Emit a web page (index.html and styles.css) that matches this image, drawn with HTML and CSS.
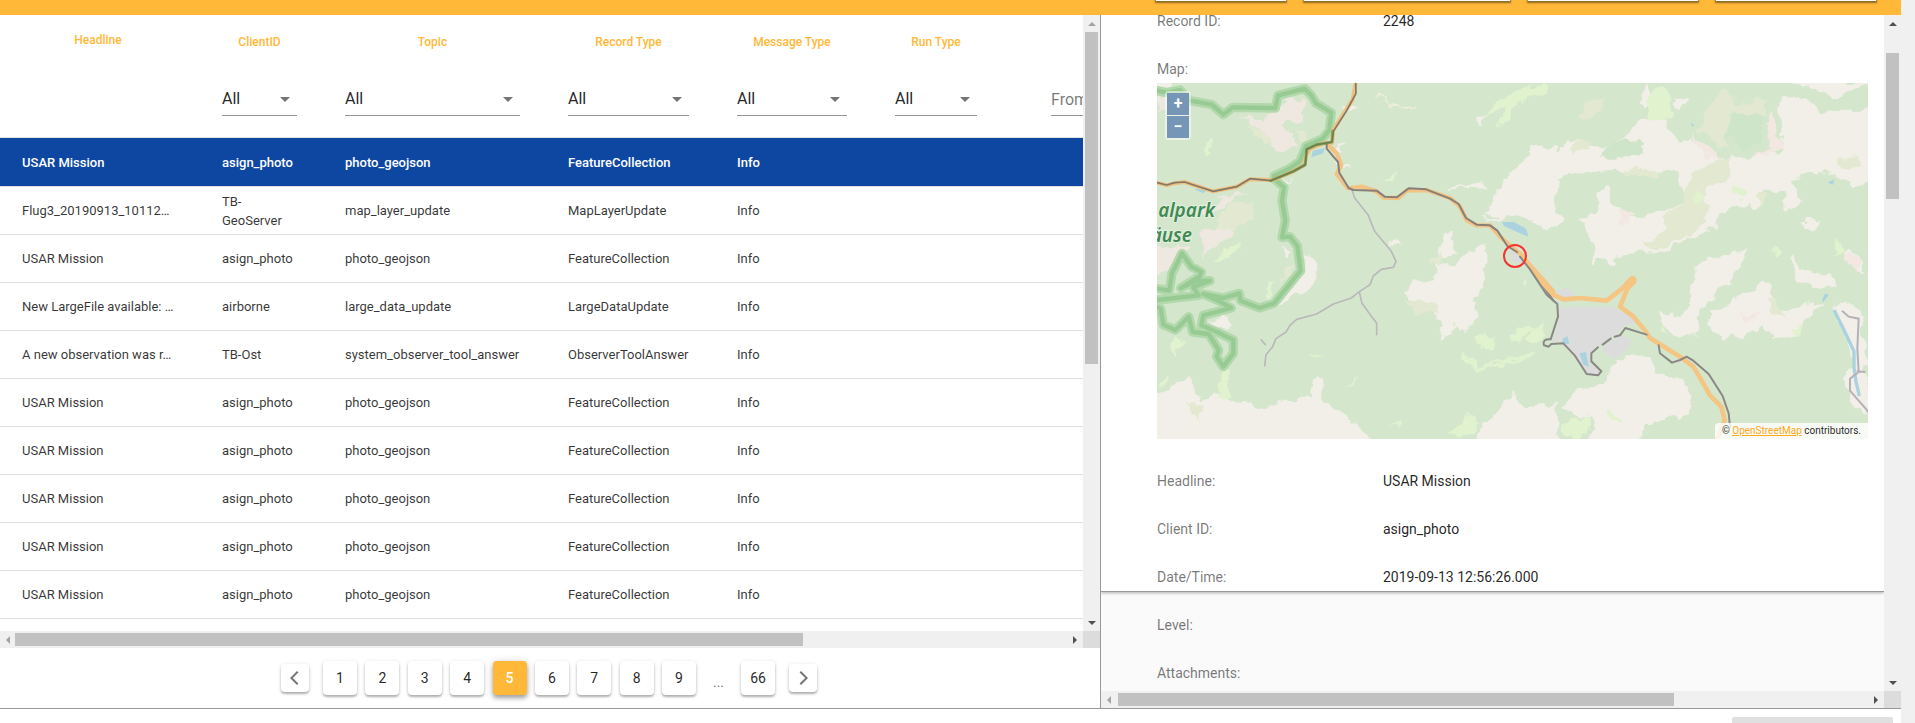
FILE: index.html
```html
<!DOCTYPE html>
<html lang="en">
<head>
<meta charset="utf-8">
<title>Records</title>
<link rel="stylesheet" href="styles.css">
</head>
<body>
<div class="page">
  <div class="app">
    <header class="toolbar">
      <button class="tool tool-s" type="button" aria-label="Tool 1"></button>
      <button class="tool tool-l" type="button" aria-label="Tool 2"></button>
      <button class="tool tool-m" type="button" aria-label="Tool 3"></button>
      <button class="tool tool-n" type="button" aria-label="Tool 4"></button>
    </header>

    <main class="panes">
      <section class="list-pane">
        <div class="scroller">
          <div class="view">
            <table class="records">
              <colgroup>
                <col class="c-head"><col class="c-client"><col class="c-topic"><col class="c-record"><col class="c-msg"><col class="c-run"><col class="c-date">
              </colgroup>
              <thead>
                <tr>
                  <th class="plain">Headline</th>
                  <th><label for="f-client">ClientID</label><span class="pick"><select id="f-client"><option>All</option></select></span></th>
                  <th><label for="f-topic">Topic</label><span class="pick"><select id="f-topic"><option>All</option></select></span></th>
                  <th><label for="f-record">Record Type</label><span class="pick"><select id="f-record"><option>All</option></select></span></th>
                  <th><label for="f-msg">Message Type</label><span class="pick"><select id="f-msg"><option>All</option></select></span></th>
                  <th><label for="f-run">Run Type</label><span class="pick"><select id="f-run"><option>All</option></select></span></th>
                  <th class="date"><input type="text" placeholder="From" aria-label="From"></th>
                </tr>
              </thead>
              <tbody>
                <tr class="selected"><td>USAR Mission</td><td>asign_photo</td><td>photo_geojson</td><td>FeatureCollection</td><td>Info</td><td></td><td></td></tr>
                <tr><td>Flug3_20190913_10112…</td><td>TB-GeoServer</td><td>map_layer_update</td><td>MapLayerUpdate</td><td>Info</td><td></td><td></td></tr>
                <tr><td>USAR Mission</td><td>asign_photo</td><td>photo_geojson</td><td>FeatureCollection</td><td>Info</td><td></td><td></td></tr>
                <tr><td>New LargeFile available: …</td><td>airborne</td><td>large_data_update</td><td>LargeDataUpdate</td><td>Info</td><td></td><td></td></tr>
                <tr><td>A new observation was r…</td><td>TB-Ost</td><td>system_observer_tool_answer</td><td>ObserverToolAnswer</td><td>Info</td><td></td><td></td></tr>
                <tr><td>USAR Mission</td><td>asign_photo</td><td>photo_geojson</td><td>FeatureCollection</td><td>Info</td><td></td><td></td></tr>
                <tr><td>USAR Mission</td><td>asign_photo</td><td>photo_geojson</td><td>FeatureCollection</td><td>Info</td><td></td><td></td></tr>
                <tr><td>USAR Mission</td><td>asign_photo</td><td>photo_geojson</td><td>FeatureCollection</td><td>Info</td><td></td><td></td></tr>
                <tr><td>USAR Mission</td><td>asign_photo</td><td>photo_geojson</td><td>FeatureCollection</td><td>Info</td><td></td><td></td></tr>
                <tr><td>USAR Mission</td><td>asign_photo</td><td>photo_geojson</td><td>FeatureCollection</td><td>Info</td><td></td><td></td></tr>
                <tr><td></td><td></td><td></td><td></td><td></td><td></td><td></td></tr>
              </tbody>
            </table>
          </div>
          <div class="bar-v">
            <span class="arrow up off"></span><div class="track"><div class="thumb list-v"></div></div><span class="arrow down"></span>
          </div>
          <div class="bar-h">
            <span class="arrow left off"></span><div class="track"><div class="thumb list-h"></div></div><span class="arrow right"></span>
          </div>
          <div class="corner"></div>
        </div>

        <nav class="pager" aria-label="Pages">
          <button class="step" type="button" aria-label="Previous page"><svg viewBox="0 0 24 24"><path d="M15.4 6.4 14 5l-7 7 7 7 1.4-1.4-5.6-5.6z"/></svg></button>
          <div class="numbers">
            <button type="button">1</button><button type="button">2</button><button type="button">3</button><button type="button">4</button><button type="button" class="current" aria-current="page">5</button><button type="button">6</button><button type="button">7</button><button type="button">8</button><button type="button">9</button>
          </div>
          <span class="more">...</span>
          <button type="button">66</button>
          <button class="step" type="button" aria-label="Next page"><svg viewBox="0 0 24 24"><path d="M8.6 17.6 10 19l7-7-7-7-1.4 1.4 5.6 5.6z"/></svg></button>
        </nav>
      </section>

      <section class="detail-pane">
        <div class="view">
          <div class="card">
            <dl class="first"><dt>Record ID:</dt><dd>2248</dd></dl>
            <p class="map-label">Map:</p>
            <div class="map">
              <svg class="map-art" viewBox="0 0 711 356" preserveAspectRatio="xMidYMid slice" role="img" aria-label="Map">
                <defs>
                  <filter id="rough" x="-2%" y="-2%" width="104%" height="104%">
                    <feTurbulence type="fractalNoise" baseFrequency="0.022" numOctaves="3" seed="4" result="n"/>
                    <feDisplacementMap in="SourceGraphic" in2="n" scale="46" xChannelSelector="R" yChannelSelector="G"/>
                    <feGaussianBlur stdDeviation="2"/>
                  </filter>
                  <filter id="soft" x="-2%" y="-2%" width="104%" height="104%"><feGaussianBlur stdDeviation="1.3"/></filter>
                </defs>
                <rect width="711" height="356" fill="#d4e7cd"/>
                <!-- land cover, west -->
                <g transform="scale(.33333) translate(-21 -39)" filter="url(#rough)">
                  <g fill="#f2efe8">
                    <path d="M10 20H70L62 56 10 62zM0 975L50 960 80 930 115 925 140 965 150 985 215 970 260 990 300 1012 350 1020 400 990 480 975 495 930 520 935 520 985 560 1020 600 1045 640 1080 660 1120H0z"/>
                    <path d="M975 1120L1000 1060 1040 1030 1090 970 1120 1020 1220 990V1130z"/>
                    <path d="M1220 230L1150 235 1140 265 1090 290 1080 310 1105 340 1060 370 1030 400 1000 430 1050 435 1080 410 1130 450 1220 470z"/>
                    <path d="M750 670L800 640 850 630 860 580 920 590 950 550 1000 525 1005 600 1000 650 970 700 985 740 970 775 915 770 870 805 875 770 840 720 790 690z"/>
                    <path d="M885 480L910 480 900 510 925 550 860 570zM460 560L505 575 500 615 460 665 380 710 420 660 460 610zM400 525L428 540 415 565 398 555zM180 755L240 740 250 765 225 778zM900 350L1010 340V352L900 358zM560 230L590 215 570 240 580 275 610 300 560 290zM720 506L760 518 730 532zM360 330L430 322 400 345z"/>
                    <path d="M1000 440L1060 445 1050 455 1000 445zM580 120L630 115 610 132zM980 150L1020 125 990 160z"/>
                  </g>
                  <g fill="#efe8e0">
                    <path d="M370 105L430 80 470 100 450 150 400 160 430 240 380 245 340 190 290 150 260 140 350 150z"/>
                    <path d="M150 420L220 380 290 365 240 400 150 445zM160 490L210 465 245 480 210 530 150 555zM10 530L80 520 120 540 70 600 10 620zM21 90L50 80 60 110 21 125z"/>
                  </g>
                  <g fill="#e2e9d0"><path d="M210 430L250 400 310 405 310 450 240 480 200 470zM300 170L350 190 370 220 330 215zM430 170L480 205 450 215zM760 690L850 700 870 735 800 730zM840 560L880 545 870 590zM110 1000L160 1000 150 1050 120 1030zM400 600L440 570 420 620 390 640z"/></g>
                  <g fill="#e0f2ce">
                    <path d="M190 560L240 530 285 515 270 545 215 565zM265 850L240 900 235 970 205 980 210 910 240 870zM350 620L368 640 358 690 346 680zM165 215L180 205 190 245 175 255zM1030 100L1090 65 1150 45 1120 80 1010 130zM890 1090L950 1035 990 1060 970 1095zM985 805L1030 795 1035 835 1000 835zM1075 800L1140 760 1160 780 1110 820zM70 800L100 820 65 860zM25 945L55 915 45 950zM590 950L625 925 605 950zM710 322L736 310 730 332zM480 850L510 848 500 860zM720 1070L750 1060 750 1080z"/>
                    <path d="M935 855L990 895 1060 880 1150 855" fill="none" stroke="#e0f2ce" stroke-width="10"/>
                  </g>
                  <path d="M680 76L720 106 800 100" fill="none" stroke="#eeede0" stroke-width="6"/>
                </g>
                <!-- land cover, east -->
                <g transform="translate(323 -13) scale(.33333)" filter="url(#rough)">
                  <g fill="#f2efe8">
                    <path d="M20 430L30 390 60 350 95 300 150 260V225L230 235 270 205 370 240 420 206 480 156 510 140 550 146 570 185 600 216 640 206 680 236 710 276 750 256 800 256 850 251 910 246 900 136 890 96 920 76 980 86 1020 126 1190 110V335L1120 346 1060 316 1000 306 930 326 950 366 975 401 910 416V361L850 356 830 416 770 406 720 436 710 466 660 496 620 516 540 545 460 550 410 560 400 590 370 570 330 580 345 540 330 490 300 450 350 420 345 370 395 345 400 400 430 440 480 440 560 420 620 400 600 340 600 310 420 296 340 300 260 310 180 340 150 390 190 400 240 460 200 475 130 440z"/>
                    <path d="M640 590L720 560 790 540 785 590 735 650 695 680 660 740 655 800 600 810 555 770 535 725 600 735 640 670z"/>
                    <path d="M690 720L740 700 800 660 850 630 880 650 885 690 905 720 1020 700 980 750 960 790 880 795 840 765 800 800 720 805 690 765z"/>
                    <path d="M240 1010L290 965 380 930 410 870 450 850 500 855 530 910 600 930 635 985 620 1030 570 1050 500 1050 480 1120H330L335 1050 290 1030z"/>
                    <path d="M0 1120L50 1060 90 970 130 1010 180 1000 240 1050 220 1120zM940 550L960 600 1060 615 1065 640 1000 655 950 635 935 590zM970 450L1030 450 1000 475 970 475zM1090 545L1150 565 1160 610 1110 600zM1060 700L1140 720 1155 900 1170 1040 1110 990 1100 920 1125 880 1100 800zM-10 530L15 525 10 620-10 660zM480 90L500 40 520 90 490 120zM580 80L620 90 600 125zM900 30L1010 55 1060 80 1120 60 1180 50V36L1040 30z"/>
                  </g>
                  <g fill="#f2e7e1"><path d="M400 425L465 425 450 450 420 455zM820 250L870 240 860 150 885 120 890 190 915 235 850 260zM640 190L700 240 700 280 670 260zM1090 560L1145 560 1140 605 1110 600zM780 730L840 735 810 755z"/></g>
                  <g fill="#e2e9d0"><path d="M650 170L690 100 730 50 760 95 860 90 850 140 750 130 740 240 690 210zM640 306L700 286 750 256 745 336 680 346 670 386 695 406 660 436 680 456 620 506 520 536 490 520 570 470 550 436 610 406 610 366zM310 100L380 80 370 120 300 160zM265 235L320 215 325 235 270 265zM430 290L540 305 540 325 440 310zM860 680L900 700 910 740 870 715zM1065 270L1140 265 1130 290 1080 290zM830 370L860 365 840 410z"/></g>
                  <g fill="#cfe5c9"><path d="M360 265L400 215 480 210 490 245 400 270zM760 120L850 140 850 220 780 235 745 200z"/></g>
                  <g fill="#e0f2ce">
                    <path d="M80 80L140 50 200 45 190 75 100 100 90 150 60 160zM500 90L550 50 575 100 580 140 510 150zM755 340L795 370 785 390zM240 1080L270 1045 330 1040 320 1090 250 1100zM130 810L200 750 190 810zM390 1010L430 1060 420 1075 395 1040zM880 530L905 545 890 565zM540 790L550 760 560 800zM640 370L680 380 650 400zM930 770L975 775 960 800zM1060 510L1100 540 1060 560zM120 640L150 620 130 655z"/>
                    <path d="M0 890L140 858" fill="none" stroke="#e0f2ce" stroke-width="8"/>
                  </g>
                </g>
                <!-- water, town, roads and boundary, west -->
                <g transform="scale(.33333) translate(-21 -39)" filter="url(#soft)">
                  <g fill="#aad3df"><path d="M484 262l4-20 36-8-4 16zM1056 456l36 0 36 20 8 24-30-12-44-20zM130 356l40 4-10 10z"/></g>
                  <defs>
                    <path id="park" d="M21 62L50 68 90 60 120 92 186 104 220 134 248 112 376 114 384 76 464 56 484 76 498 100 544 128 538 180 518 206 468 228 450 274 418 296 372 318V326L402 352 396 392 406 452 396 502 420 500 442 528 452 602 372 700 328 714 272 692 268 670 220 684 160 672 200 690 244 714 160 736 154 766 210 790 250 810V850L220 890 200 860 206 840 176 792 128 786 116 740 76 780 40 764 32 716 21 712M21 656L58 662 66 610 96 550 124 590 154 606 150 618 92 654 140 632 180 632 130 652 146 676 21 690"/>
                  </defs>
                  <g fill="none" stroke-linejoin="round" stroke-linecap="round">
                    <use href="#park" stroke="#b2d8ac" stroke-width="28"/>
                    <use href="#park" stroke="#98cb94" stroke-width="13"/>
                    <path d="M606 360l8 24 40 50 20 50 50 60 14 30-8 18-36 6-24 20-10 26-36 24-20 16-54 18-50 30-60 16-20 18-12 20-30 20-10 24-20 24-4 34M628 666l8 34 26 36 18 24 0 34M334 810l12 14" stroke="#bbb8bb" stroke-width="5"/>
                    <path d="M617 39L608 88 580 132 550 180 546 218 520 220 480 236 468 256 462 286 430 304 370 330 300 328 260 350 190 364 140 348 104 336 74 340 50 346 21 338" stroke="#f0c080" stroke-width="12"/>
                    <path d="M536 226L560 250 574 285 560 312 594 355 635 350 680 364 700 383 746 384 770 362 830 360 900 384 930 410 950 450 980 466 1020 466 1050 500 1110 552 1210 664" stroke="#f3c384" stroke-width="13"/>
                    <path d="M617 39L618 70 590 122 550 184 546 216 500 224 470 238 466 284 430 304 362 332 300 326 260 350 190 364 140 348 104 336 74 338 50 345 21 338" stroke="#827869" stroke-width="5"/>
                    <path d="M530 222V236L564 276 568 308 596 354 610 360 680 362 704 380 740 382 776 355 828 358 900 386 926 402 948 444 980 464 1020 466 1042 482 1072 528 1120 558 1210 692" stroke="#87807a" stroke-width="6"/>
                    <path d="M548 184L546 216 500 224 470 238 466 284 430 304 362 332" stroke="#52883a" stroke-opacity=".55" stroke-width="9"/>
                  </g>
                </g>
                <!-- water, town and roads, east -->
                <g transform="translate(323 -13) scale(.33333)" filter="url(#soft)">
                  <g fill="#dcdcdc"><path d="M240 712L400 710 450 740 470 760 430 768 410 796 370 820 335 850V880L362 905 350 914 320 912 285 855 240 810 215 820 235 760zM370 825L425 796 455 810 440 840 405 868 370 845zM86 540L116 554 128 580 96 572zM230 662L260 652 292 680 240 682z"/></g>
                  <g fill="#aad3df"><path d="M248 806l14-8 6 24-20 0zM298 850l20-4 8 44-16-6zM1044 338l18-10-2 16zM1026 690l10-20 10 6-16 20zM632 160l10 2-4 10z"/></g>
                  <path d="M1062 720l30 60 30 64 0 50 6 40 10 44" fill="none" stroke="#aad3df" stroke-width="10"/>
                  <path d="M1086 722l20 18 30 6-4 90 4 70-26 20 0 36 26 30 30 34M1130 904l26 2" fill="none" stroke="#b4b2b6" stroke-width="6"/>
                  <g fill="none" stroke-linejoin="round" stroke-linecap="round">
                    <path d="M120 550L160 600 188 638 220 674 250 688 300 684 380 692 426 656 456 624Q468 626 460 638L442 656 420 710 456 736 494 780 510 804 600 860 640 890 664 930 690 976 724 1010 734 1050 712 1107" stroke="#f5c583" stroke-width="14"/>
                    <path d="M120 560L150 598 200 674 232 702 234 740 212 808Q186 806 192 826L206 830 214 822 250 820 284 856 320 912 354 916 364 904 334 874V850L354 832M368 824L392 806M404 800L420 796 436 774 500 794M536 826L540 850 576 878 600 870 620 860 640 872 686 912 728 978 746 1030 750 1070" stroke="#8a8884" stroke-width="6"/>
                  </g>
                </g>
                <g class="map-name"><text x="58" y="134">alpark</text><text x="35" y="159">äuse</text></g>
                <circle cx="358" cy="173" r="11" fill="none" stroke="#f53333" stroke-width="2"/>
              </svg>
              <div class="zoom-box">
                <button type="button" aria-label="Zoom in">+</button>
                <button type="button" aria-label="Zoom out">−</button>
              </div>
              <p class="credit">© <a href="#">OpenStreetMap</a> contributors.</p>
            </div>
            <dl class="fields">
              <dt>Headline:</dt><dd>USAR Mission</dd>
              <dt>Client ID:</dt><dd>asign_photo</dd>
              <dt>Date/Time:</dt><dd>2019-09-13 12:56:26.000</dd>
              <dt>Level:</dt><dd></dd>
              <dt>Attachments:</dt><dd></dd>
            </dl>
          </div>
        </div>
        <div class="bar-v">
          <span class="arrow up"></span><div class="track"><div class="thumb detail-v"></div></div><span class="arrow down"></span>
        </div>
        <div class="bar-h">
          <span class="arrow left off"></span><div class="track"><div class="thumb detail-h"></div></div><span class="arrow right"></span>
        </div>
        <div class="corner"></div>
      </section>
    </main>

    <footer class="footer"><button type="button" aria-label="Action"></button></footer>
  </div>
  <div class="page-track"></div>
</div>
</body>
</html>
```

FILE: styles.css
```css
* {
  box-sizing: border-box;
}

body {
  margin: 0;
  font-family: Roboto, "Liberation Sans", sans-serif;
  color: rgba(0, 0, 0, 0.87);
  background: #fff;
  overflow: hidden;
}

p, dl, dd {
  margin: 0;
}

button, select, input {
  font: inherit;
  color: inherit;
  border: 0;
  padding: 0;
}

.page {
  display: grid;
  grid-template-columns: minmax(0, 1fr) 14px;
  grid-template-rows: minmax(0, 1fr);
  height: 100vh;
}

.page-track {
  background: #f0f0f0;
}

.app {
  display: grid;
  grid-template-rows: 15px minmax(0, 1fr) 14px;
  min-height: 0;
}

/* top bar */
.toolbar {
  display: flex;
  justify-content: flex-end;
  align-items: flex-start;
  gap: 18px;
  padding-right: 25px;
  background: #ffb838;
}

.tool {
  height: 1px;
  background: #fff;
  box-shadow: 0 1px 2px 1px rgba(0, 0, 0, 0.45);
}

.tool-s { width: 130px; }
.tool-l { width: 206px; }
.tool-m { width: 170px; }
.tool-n { width: 160px; }

.panes {
  display: grid;
  grid-template-columns: 1101fr 800fr;
  grid-template-rows: minmax(0, 1fr);
  min-height: 0;
  border-bottom: 1px solid #999;
}

/* scroll bars */
.scroller, .detail-pane {
  display: grid;
  grid-template-columns: minmax(0, 1fr) 17px;
  grid-template-rows: minmax(0, 1fr) 17px;
  min-height: 0;
}

.view {
  overflow: hidden;
  min-width: 0;
}

.bar-v, .bar-h {
  display: grid;
  place-items: center;
  background: #f0f0f0;
}

.bar-v {
  grid-template-rows: 17px minmax(0, 1fr) 17px;
}

.bar-h {
  grid-template-columns: 15px minmax(0, 1fr) 17px;
}

.track {
  width: 100%;
  height: 100%;
}

.thumb {
  background: #c1c1c1;
}

.bar-v .track { padding: 0 2px; }
.bar-h .track { padding: 2px 0; }
.list-v { height: 57%; }
.list-h { height: 100%; width: 75%; }
.detail-v { height: 146px; margin-top: 21px; }
.detail-h { height: 100%; width: 74%; margin-left: 2px; }

.corner {
  background: #dcdcdc;
}

.arrow {
  border: 4px solid transparent;
}

.arrow.up { border-top: 0; border-bottom-color: #505050; }
.arrow.down { border-bottom: 0; border-top-color: #505050; }
.arrow.left { border-left: 0; border-right-color: #505050; }
.arrow.right { border-right: 0; border-left-color: #505050; }
.arrow.up.off { border-bottom-color: #a3a3a3; }
.arrow.left.off { border-right-color: #a3a3a3; }

/* record list */
.list-pane {
  display: grid;
  grid-template-rows: minmax(0, 1fr) 60px;
  min-height: 0;
  border-right: 1px solid #999;
}

.records {
  width: 1447px;
  table-layout: fixed;
  border-collapse: separate;
  border-spacing: 0;
  font-size: 13px;
}

.c-head { width: 198px; }
.c-client { width: 123px; }
.c-topic { width: 223px; }
.c-record { width: 169px; }
.c-msg { width: 158px; }
.c-run { width: 130px; }

.records th {
  height: 123px;
  padding: 17px 24px 0;
  vertical-align: top;
  font-size: 12px;
  font-weight: 500;
  color: #ffb838;
  line-height: 20px;
  border-bottom: 1px solid #e0e0e0;
}

.records th.plain {
  padding: 15px 24px 0 22px;
}

.records th label {
  display: block;
}

.records td {
  height: 48px;
  padding: 0 24px;
  line-height: 19px;
  color: rgba(0, 0, 0, 0.8);
  border-bottom: 1px solid #e0e0e0;
}

.records tbody tr:first-child td {
  height: 49px;
}

.records td:first-child {
  padding: 0 0 0 22px;
}

.records .selected td {
  background: #0d47a1;
  color: #fff;
  font-weight: 500;
}

.pick {
  display: block;
  position: relative;
  margin-top: 31px;
}

.pick::after {
  content: "";
  position: absolute;
  right: 7px;
  top: 14px;
  border: 5px solid transparent;
  border-bottom: 0;
  border-top-color: #757575;
  pointer-events: none;
}

.records select, .records input {
  display: block;
  width: 100%;
  height: 33px;
  appearance: none;
  background: transparent;
  border-bottom: 1px solid #949494;
  border-radius: 0;
  font-size: 16px;
  font-weight: 400;
  color: rgba(0, 0, 0, 0.87);
}

.records th.date {
  padding: 68px 24px 0 50px;
}

.records input::placeholder {
  color: rgba(0, 0, 0, 0.54);
}

/* pagination */
.pager {
  display: flex;
  align-items: center;
  justify-content: center;
  gap: 14px;
  background: #fff;
  border-radius: 2px;
  padding-right: 2px;
}

.numbers {
  display: flex;
  justify-content: space-between;
  width: 373px;
}

.pager button {
  display: grid;
  place-items: center;
  width: 34px;
  height: 34px;
  border-radius: 4px;
  background: #fff;
  font-size: 14px;
  box-shadow: 0 2px 2px rgba(0, 0, 0, 0.24), 0 1px 4px rgba(0, 0, 0, 0.14);
}

.pager .current {
  background: #ffb838;
  color: #fff;
  font-weight: 500;
  box-shadow: 0 3px 4px rgba(0, 0, 0, 0.3), 0 1px 8px rgba(0, 0, 0, 0.16);
}

.pager .step {
  width: 28px;
  height: 28px;
}

.pager svg {
  width: 24px;
  height: 24px;
  fill: #757575;
}

.more {
  width: 17px;
  padding-top: 8px;
  text-align: center;
  font-size: 14px;
  color: rgba(0, 0, 0, 0.6);
}

/* record details */
.detail-pane {
  background: #fafafa;
}

.card {
  height: calc(100% - 99px);
  padding: 0 16px 0 56px;
  background: #fff;
  border-bottom: 1px solid #999;
  box-shadow: 0 1px 3px rgba(0, 0, 0, 0.3);
  font-size: 14px;
}

.first, .fields {
  display: grid;
  grid-template-columns: 226px 1fr;
}

.first {
  line-height: 12px;
}

.fields {
  padding-top: 18px;
  line-height: 48px;
}

dt, .map-label {
  color: rgba(0, 0, 0, 0.54);
}

.map-label {
  padding-top: 32px;
  line-height: 20px;
}

.map {
  position: relative;
  height: 356px;
  margin-top: 4px;
}

.map-art {
  display: block;
  width: 100%;
  height: 100%;
}

.map-name {
  font: italic 600 19px "Noto Sans", sans-serif;
  fill: #3f8a52;
  stroke: #e4efdf;
  stroke-width: 2px;
  paint-order: stroke;
  text-anchor: end;
}

.zoom-box {
  position: absolute;
  top: 8px;
  left: 8px;
  display: grid;
  gap: 1px;
  padding: 2px;
  border-radius: 4px;
  background: rgba(255, 255, 255, 0.5);
}

.zoom-box button {
  width: 22px;
  height: 22px;
  background: #7596b7;
  color: #fff;
  font-size: 16px;
  font-weight: 700;
  line-height: 20px;
}

.credit {
  position: absolute;
  right: 0;
  bottom: 0;
  padding: 0 7px;
  border-radius: 4px 0 0;
  background: rgba(255, 255, 255, 0.8);
  font-size: 10px;
  line-height: 16px;
}

.credit a {
  color: #ffa81c;
}

.footer {
  display: flex;
  justify-content: flex-end;
  padding: 8px 8px 0;
}

.footer button {
  width: 161px;
  height: 6px;
  border-radius: 2px 2px 0 0;
  background: #e0e0e0;
}
```
